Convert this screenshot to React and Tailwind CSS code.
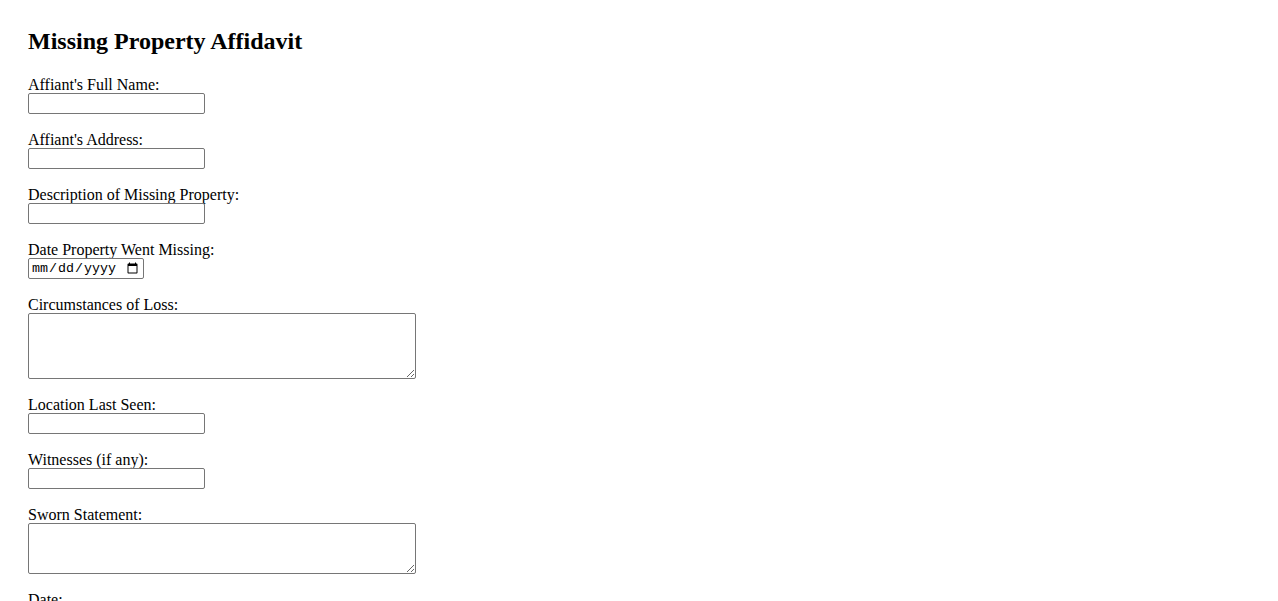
import React from 'react';

const fields = [
  { label: "Affiant's Full Name:", type: 'text' },
  { label: "Affiant's Address:", type: 'text' },
  { label: 'Description of Missing Property:', type: 'text' },
  { label: 'Date Property Went Missing:', type: 'date' },
  { label: 'Circumstances of Loss:', type: 'area', h: 'h-[66px]' },
  { label: 'Location Last Seen:', type: 'text' },
  { label: 'Witnesses (if any):', type: 'text' },
  { label: 'Sworn Statement:', type: 'area', h: 'h-[51px]' },
  { label: 'Date:', type: 'date' },
];

function Field({ label, type, h }) {
  return (
    <div className="flex flex-col items-start mb-[16px]">
      <label className="block text-[16px] leading-[18px] pt-[1px] -mb-[1px] text-black">{label}</label>
      {type === 'text' && (
        <input
          type="text"
          className="w-[177px] h-[21px] border border-[#767676] rounded-[2px] px-[2px] text-[13.33px] font-['Liberation_Sans',sans-serif] bg-white"
        />
      )}
      {type === 'date' && (
        <input
          type="date"
          className="w-[116px] h-[21px] border border-[#767676] rounded-[2px] px-[2px] text-[13.33px] font-['Liberation_Mono',monospace] bg-white"
        />
      )}
      {type === 'area' && (
        <textarea
          className={`w-[388px] ${h} border border-[#767676] rounded-[2px] px-[2px] text-[13.33px] font-['Liberation_Mono',monospace] bg-white resize`}
        />
      )}
    </div>
  );
}

export default function App() {
  return (
    <div className="min-h-screen bg-white pl-[28px] pt-[27px] font-['Liberation_Serif',serif] text-black">
      <h2 className="text-[24px] font-bold leading-[28px] mb-[20px]">Missing Property Affidavit</h2>
      <form>
        {fields.map((f) => (
          <Field key={f.label} {...f} />
        ))}
      </form>
    </div>
  );
}
